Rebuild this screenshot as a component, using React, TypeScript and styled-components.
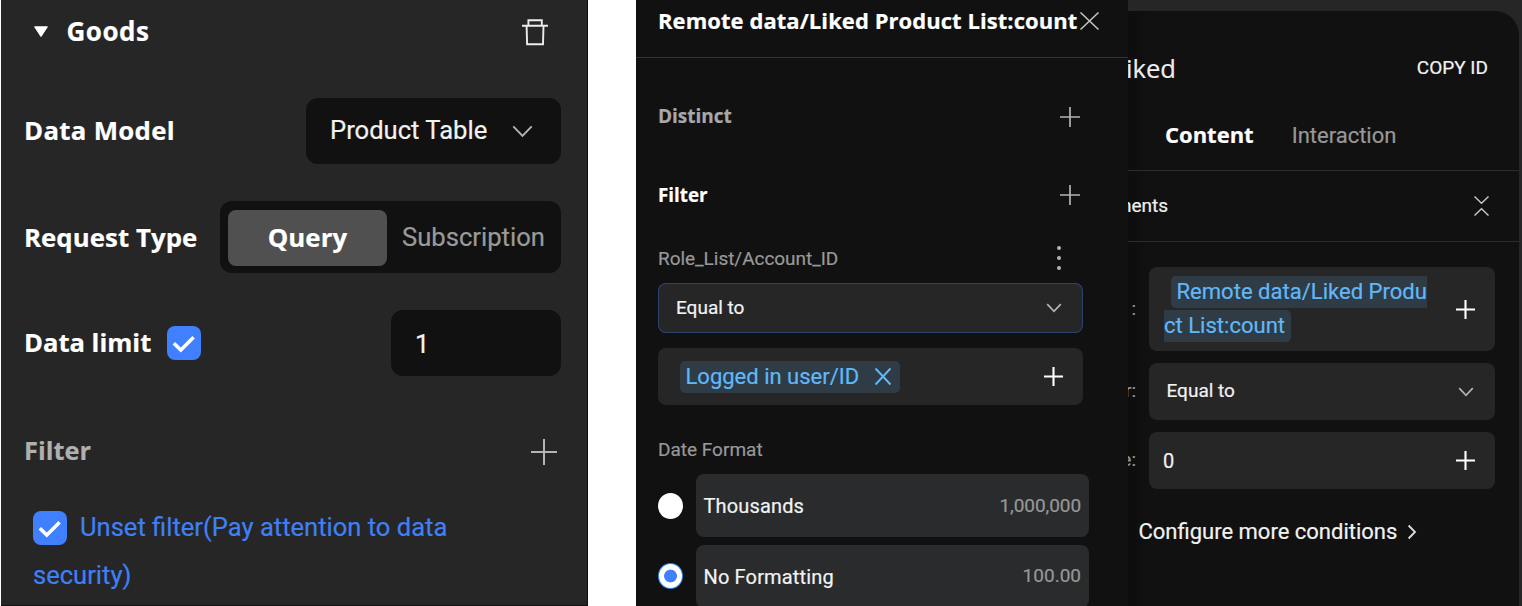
import React from "react";
import styled, { createGlobalStyle, css } from "styled-components";

const Global = createGlobalStyle`
  *, *::before, *::after { box-sizing: border-box; }
  body { margin: 0; background: #fff; overflow: hidden; }
`;

const ui = `Roboto, "Liberation Sans", sans-serif`;
const display = `"Open Sans", "Noto Sans", sans-serif`;

const Page = styled.main`
  display: flex;
  width: 1522px;
  height: 606px;
  padding-left: 1px;
  overflow: hidden;
  font-family: ${ui};
  color: #f2f2f2;
`;

const Label = styled.span<{ $size?: number; $color?: string; $track?: number; $dy?: number }>`
  font-family: ${ui};
  font-size: ${(p) => p.$size ?? 19}px;
  letter-spacing: ${(p) => p.$track ?? 0}px;
  line-height: 1.2;
  white-space: pre;
  color: ${(p) => p.$color ?? "#f2f2f2"};
  margin-top: ${(p) => p.$dy ?? 0}px;
  -webkit-text-stroke: 0.2px currentColor;
`;

const Heading = styled(Label)<{ $weight?: number }>`
  font-family: ${display};
  font-weight: ${(p) => p.$weight ?? 700};
  color: ${(p) => p.$color ?? "#fff"};
`;

const Glyph = styled.svg`
  display: block;
  flex: none;
  fill: none;
  overflow: visible;
`;

/* ---------- data source panel ---------- */

const SourcePanel = styled.section`
  flex: none;
  width: 587px;
  height: 606px;
  margin-right: 48px;
  padding: 0 26px 0 23px;
  background: #262626;
  border-right: 1px solid #111;
  border-bottom: 1px solid #111;
`;

const SourceHeader = styled.header`
  display: flex;
  align-items: center;
  height: 64px;
  padding: 0 13px 0 9px;
  gap: 17.5px;

  & > :last-child { margin-left: auto; }
`;

const Field = styled.div<{ $top: number; $height: number; $right?: number }>`
  display: flex;
  align-items: center;
  justify-content: space-between;
  height: ${(p) => p.$height}px;
  margin-top: ${(p) => p.$top}px;
  padding-right: ${(p) => p.$right ?? 0}px;
`;

const FieldName = styled.div`
  display: flex;
  align-items: center;
  gap: 16px;
`;

const DarkBox = styled.div<{ $width: number }>`
  display: flex;
  align-items: center;
  justify-content: space-between;
  width: ${(p) => p.$width}px;
  height: 66px;
  padding: 0 29px 0 24px;
  border-radius: 12px;
  background: #111;
`;

const Segments = styled.div`
  display: flex;
  width: 341px;
  height: 72px;
  padding: 8.5px 8px 7.5px;
  border-radius: 12px;
  background: #111;
`;

const Segment = styled.div<{ $active?: boolean }>`
  display: flex;
  align-items: center;
  justify-content: center;
  flex: ${(p) => (p.$active ? "0 0 159px" : "1")};
  padding-left: ${(p) => (p.$active ? 0 : 7)}px;
  border-radius: 8px;
  ${(p) => p.$active && css`background: #505050;`}
`;

const CheckBox = styled.span`
  display: inline-flex;
  align-items: center;
  justify-content: center;
  flex: none;
  width: 34px;
  height: 34px;
  border-radius: 8px;
  background: #4080ff;
`;

const Notice = styled.p`
  margin: 18px 0 0 9px;
  font-size: 25.55px;
  line-height: 48px;
  color: #4080f5;
  white-space: nowrap;
  -webkit-text-stroke: 0.2px currentColor;

  ${CheckBox} { margin-right: 13px; vertical-align: -9px; }
`;

/* ---------- binding panel ---------- */

const BindingPanel = styled.section`
  flex: none;
  width: 492px;
  height: 606px;
  background: #111;
  overflow: hidden;
`;

const BindingHeader = styled.header`
  display: flex;
  align-items: center;
  height: 58px;
  padding: 0 27px 15px 22px;
  gap: 3px;
  border-bottom: 1px solid #333;
`;

const BindingBody = styled.div`
  display: flex;
  flex-direction: column;
  padding: 0 45px 0 22px;
`;

const Line = styled.div<{ $height: number; $top?: number; $right?: number }>`
  display: flex;
  align-items: center;
  justify-content: space-between;
  height: ${(p) => p.$height}px;
  margin-top: ${(p) => p.$top ?? 0}px;
  padding-right: ${(p) => p.$right ?? 0}px;
`;

const Input = styled.div<{ $height: number; $top?: number; $focus?: boolean; $pad?: string }>`
  display: flex;
  align-items: center;
  justify-content: space-between;
  height: ${(p) => p.$height}px;
  margin-top: ${(p) => p.$top ?? 0}px;
  padding: ${(p) => p.$pad ?? "0 21.5px 0 17.5px"};
  border-radius: 8px;
  background: #262626;
  ${(p) => p.$focus && css`box-shadow: inset 0 0 0 1px #2b436f;`}
`;

const Tag = styled.span`
  display: flex;
  align-items: center;
  gap: 16px;
  height: 32px;
  padding: 0 9px 0 5.5px;
  border-radius: 5px;
  background: #2f3c46;
`;

const Choice = styled.div<{ $top: number }>`
  display: flex;
  align-items: center;
  flex: none;
  height: 63px;
  width: 430.5px;
  margin-top: ${(p) => p.$top}px;
  gap: 13px;
`;

const Radio = styled.span<{ $on?: boolean }>`
  flex: none;
  width: 25px;
  height: 26px;
  margin-bottom: ${(p) => (p.$on ? 2 : 0)}px;
  border-radius: 50%;
  background: ${(p) => (p.$on ? "radial-gradient(circle, #4080ff 6px, #fff 6.8px)" : "#fff")};
  ${(p) => p.$on && css`border: 1px solid #2f8cf0;`}
`;

const ChoiceCard = styled.div`
  display: flex;
  align-items: center;
  justify-content: space-between;
  flex: 1;
  height: 63px;
  padding: 0 7.5px;
  border-radius: 8px;
  background: #2a2b2d;
`;

/* ---------- component panel ---------- */

const Backdrop = styled.section`
  flex: none;
  width: 394px;
  height: 606px;
  padding: 11px 3px 0 0;
  background: #262626;
`;

const ComponentPanel = styled.div`
  height: 595px;
  border-radius: 0 24px 0 0;
  background: linear-gradient(90deg, #0d0d0d 0, #111 22px);
  overflow: hidden;
`;

const TitleRow = styled.div`
  display: flex;
  align-items: center;
  justify-content: space-between;
  height: 84px;
  padding: 30px 31px 0 0;

  & > :first-child { margin-left: -2px; }
`;

const Tabs = styled.nav`
  display: flex;
  align-items: center;
  gap: 38px;
  height: 76px;
  padding: 4px 0 0 37px;
  border-bottom: 1px solid #2c2c2c;
`;

const GroupRow = styled.div`
  display: flex;
  align-items: center;
  justify-content: space-between;
  height: 71px;
  padding: 0 30px 0 0;
  border-bottom: 1px solid #2c2c2c;

  & > :first-child { margin-left: -7px; }
`;

const Condition = styled.div<{ $top: number }>`
  display: grid;
  grid-template-columns: 8px 345.5px;
  justify-content: start;
  align-items: center;
  column-gap: 13px;
  margin-top: ${(p) => p.$top}px;
`;

const ConditionName = styled(Label)`
  justify-self: end;
`;

const Binding = styled.p`
  margin: 0;
  width: 268px;
  font-size: 22.05px;
  line-height: 34px;
  color: #60b8f8;
  white-space: pre;
  -webkit-text-stroke: 0.2px currentColor;
`;

const BindingMark = styled.span`
  margin-left: 6.5px;
  padding: 3px 6px 4px 6px;
  border-radius: 5px;
  background: #2f3c46;
`;

const More = styled.div`
  display: flex;
  align-items: center;
  gap: 11px;
  height: 30px;
  margin: 28px 0 0 10.5px;
`;

/* ---------- glyphs ---------- */

const Plus = ({ size = 20, color = "#b4b4b4", width = 1.7 }: { size?: number; color?: string; width?: number }) => (
  <Glyph width={size} height={size} viewBox={`0 0 ${size} ${size}`} stroke={color} strokeWidth={width}>
    <path d={`M${size / 2} 0V${size}M0 ${size / 2}H${size}`} />
  </Glyph>
);

const Chevron = ({ size = 14, color = "#b4b4b4", width = 1.7 }: { size?: number; color?: string; width?: number }) => (
  <Glyph width={size} height={size * 0.55} viewBox="0 0 20 11" stroke={color} strokeWidth={(width * 20) / size}>
    <path d="M.3.3 10 10.4 19.7.3" />
  </Glyph>
);

const Cross = ({ w, h, color, width }: { w: number; h: number; color: string; width: number }) => (
  <Glyph width={w} height={h} viewBox={`0 0 ${w} ${h}`} stroke={color} strokeWidth={width}>
    <path d={`M.5.5 ${w - 0.5} ${h - 0.5}M${w - 0.5}.5.5 ${h - 0.5}`} />
  </Glyph>
);

const Trash = () => (
  <Glyph width="26" height="27" viewBox="0 0 26 27" stroke="#ececec" strokeWidth="1.9">
    <path d="M0 6.7H26M6.4 6.7V1.3H19.8V6.7M4.6 6.7 5.1 25.2H21L21.5 6.7" />
  </Glyph>
);

const Tick = () => (
  <Glyph width="34" height="34" viewBox="0 0 34 34" stroke="#fff" strokeWidth="3.5">
    <path d="M6.8 17.2 13.8 24 26.6 11.2" />
  </Glyph>
);

const Caret = () => (
  <Glyph width="16" height="12" viewBox="0 0 16 12">
    <path d="M1.6.8H14.4L8 10.6Z" fill="#fff" stroke="#fff" strokeWidth="1" strokeLinejoin="round" />
  </Glyph>
);

const Dots = () => (
  <Glyph width="4" height="24" viewBox="0 0 4 24">
    <g fill="#b4b4b4">
      <circle cx="2" cy="2" r="2" />
      <circle cx="2" cy="12" r="2" />
      <circle cx="2" cy="22" r="2" />
    </g>
  </Glyph>
);

const Collapse = () => (
  <Glyph width="15" height="20" viewBox="0 0 15 20" stroke="#c4c4c4" strokeWidth="1.5">
    <path d="M.5.5 7.5 7.2 14.5.5M.5 19.5 7.5 12.8 14.5 19.5" />
  </Glyph>
);

const ArrowRight = () => (
  <Glyph width="8" height="14" viewBox="0 0 8 14" stroke="#ddd" strokeWidth="1.8">
    <path d="M.6.5 7 7 .6 13.5" />
  </Glyph>
);

export default function App() {
  return (
    <>
      <Global />
      <Page>
        <SourcePanel>
          <SourceHeader>
            <Caret />
            <Heading $size={26} $track={0.5}>Goods</Heading>
            <Trash />
          </SourceHeader>
          <Field $top={34} $height={66}>
            <Heading $size={25.8} $track={0.3} $dy={-2}>Data Model</Heading>
            <DarkBox $width={255}>
              <Label $size={25.6} $dy={-2}>Product Table</Label>
              <Chevron size={19} width={1.9} />
            </DarkBox>
          </Field>
          <Field $top={37} $height={72}>
            <Heading $size={25.8} $track={0.05}>Request Type</Heading>
            <Segments>
              <Segment $active>
                <Heading $size={25.8} $track={0.1}>Query</Heading>
              </Segment>
              <Segment>
                <Label $size={25.6} $color="#9a9a9a">Subscription</Label>
              </Segment>
            </Segments>
          </Field>
          <Field $top={37} $height={66}>
            <FieldName>
              <Heading $size={25.6}>Data limit</Heading>
              <CheckBox><Tick /></CheckBox>
            </FieldName>
            <DarkBox $width={170}>
              <Label $size={25.6} $dy={2}>1</Label>
            </DarkBox>
          </Field>
          <Field $top={43} $height={66} $right={4}>
            <Heading $size={25.4} $color="#b0b0b0" $dy={-4}>Filter</Heading>
            <Plus size={26} width={2} />
          </Field>
          <Notice>
            <CheckBox><Tick /></CheckBox>
            Unset filter(Pay attention to data
            <br />
            security)
          </Notice>
        </SourcePanel>

        <BindingPanel>
          <BindingHeader>
            <Heading $size={22} $track={0.06} $dy={-2}>Remote data/Liked Product List:count</Heading>
            <Cross w={19} h={18} color="#c8c8c8" width={1.5} />
          </BindingHeader>
          <BindingBody>
            <Line $height={40} $top={39} $right={3}>
              <Heading $size={19} $color="#a8a8a8" $dy={-2}>Distinct</Heading>
              <Plus />
            </Line>
            <Line $height={40} $top={38} $right={3}>
              <Heading $size={18.8}>Filter</Heading>
              <Plus />
            </Line>
            <Line $height={30} $top={28} $right={22.5}>
              <Label $color="#989898" $dy={2} $track={-0.04}>Role_List/Account_ID</Label>
              <Dots />
            </Line>
            <Input $height={50} $top={10} $focus $pad="0 22px 0 18px">
              <Label>Equal to</Label>
              <Chevron />
            </Input>
            <Input $height={57} $top={15} $pad="0 20px 0 22px">
              <Tag>
                <Label $size={22} $color="#60b8f8" $dy={2}>Logged in user/ID</Label>
                <Cross w={16} h={17} color="#60b8f8" width={1.9} />
              </Tag>
              <Plus size={19} color="#fff" width={2.1} />
            </Input>
            <Line $height={30} $top={29}>
              <Label $color="#989898" $dy={2}>Date Format</Label>
            </Line>
            <Choice $top={10}>
              <Radio />
              <ChoiceCard>
                <Label $size={20} $track={0.15}>Thousands</Label>
                <Label $color="#989898" $dy={1} $track={-0.08}>1,000,000</Label>
              </ChoiceCard>
            </Choice>
            <Choice $top={8}>
              <Radio $on />
              <ChoiceCard>
                <Label $size={20} $track={0.15}>No Formatting</Label>
                <Label $color="#989898">100.00</Label>
              </ChoiceCard>
            </Choice>
          </BindingBody>
        </BindingPanel>

        <Backdrop>
          <ComponentPanel>
            <TitleRow>
              <Heading $size={25.6} $weight={400} $color="#eee" $dy={2}>iked</Heading>
              <Label>COPY ID</Label>
            </TitleRow>
            <Tabs>
              <Heading $size={22}>Content</Heading>
              <Label $size={22} $color="#989898" $dy={3}>Interaction</Label>
            </Tabs>
            <GroupRow>
              <Label>nents</Label>
              <Collapse />
            </GroupRow>
            <Condition $top={25}>
              <ConditionName $color="#989898">:</ConditionName>
              <Input $height={84} $pad="0 20px 0 15px">
                <Binding>
                  <BindingMark>Remote data/Liked Produ{"\n"}ct List:count</BindingMark>
                </Binding>
                <Plus size={19} color="#fff" width={2.1} />
              </Input>
            </Condition>
            <Condition $top={12}>
              <ConditionName $color="#989898">r:</ConditionName>
              <Input $height={57}>
                <Label>Equal to</Label>
                <Chevron />
              </Input>
            </Condition>
            <Condition $top={12}>
              <ConditionName $color="#989898">e:</ConditionName>
              <Input $height={57} $pad="0 20px 0 14px">
                <Label $size={20}>0</Label>
                <Plus size={19} color="#fff" width={2.1} />
              </Input>
            </Condition>
            <More>
              <Label $size={22}>Configure more conditions</Label>
              <ArrowRight />
            </More>
          </ComponentPanel>
        </Backdrop>
      </Page>
    </>
  );
}
